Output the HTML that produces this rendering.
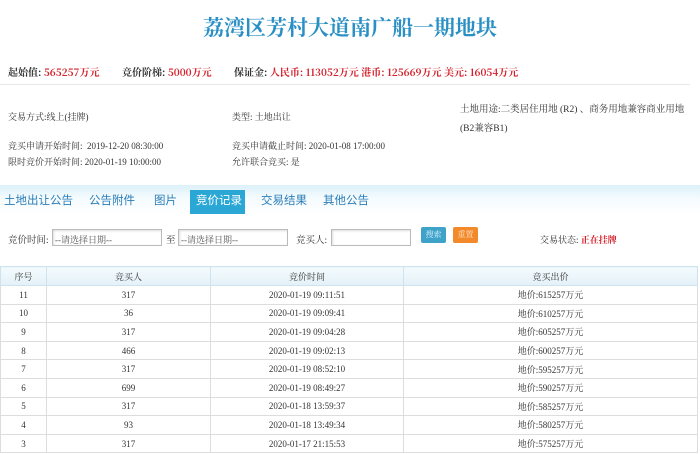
<!DOCTYPE html>
<html><head><meta charset="utf-8"><style>
*{margin:0;padding:0;box-sizing:border-box}
body{width:700px;height:454px;overflow:hidden;background:#fff;font-family:"Liberation Serif","Noto Serif CJK SC","Noto Sans CJK SC",serif;color:#333;position:relative;font-size:10px}
.a{position:absolute;white-space:nowrap}
.r{color:#d4202a;font-weight:bold}
.title{left:0;width:700px;text-align:center;top:12px;font-size:21px;color:#2a8fc4;font-family:"Noto Serif CJK SC",serif;font-weight:bold}
.tab{position:absolute;top:192px;font-size:11.5px;color:#2a7eb8;font-family:"Noto Sans CJK SC",sans-serif}
.inp{position:absolute;top:229px;height:17px;border:1px solid #bbb;background:#fff;font-size:9px;color:#555;padding:3px 2px;box-shadow:inset 1px 1px 2px #ddd}
table{position:absolute;left:0;top:266px;width:698px;border-collapse:collapse;font-size:9px;font-family:"Liberation Serif","Noto Serif CJK SC",serif}
td,th{border:1px solid #ddd;text-align:center;height:18.6px;font-weight:normal}
th{background:linear-gradient(#f4fafd,#e3f1f8);height:19px;color:#333;border-color:#cfe3ee}
.h{font-size:10px;font-weight:bold;font-family:'Noto Serif CJK SC',serif;top:64px}
</style></head><body>
<div class="a title">荔湾区芳村大道南广船一期地块</div>
<div class="a h" style="left:8px">起始值: <span class="r">565257万元</span></div>
<div class="a h" style="left:122px">竞价阶梯: <span class="r">5000万元</span></div>
<div class="a h" style="left:234px">保证金: <span class="r">人民币: 113052万元 港币: 125669万元 美元: 16054万元</span></div>
<div class="a" style="top:84px;left:0;width:690px;height:1px;background:#e8e8e8"></div>
<div class="a" style="top:110px;left:8px;font-size:9px">交易方式:线上(挂牌)</div>
<div class="a" style="top:110px;left:232px;font-size:9px">类型: 土地出让</div>
<div class="a" style="top:101px;left:460px;font-size:9.5px;line-height:19px;white-space:normal;width:232px">土地用途:二类居住用地 (R2) 、商务用地兼容商业用地 (B2兼容B1)</div>
<div class="a" style="top:139px;left:8px;font-size:9px">竞买申请开始时间: &nbsp;2019-12-20 08:30:00</div>
<div class="a" style="top:139px;left:232px;font-size:9px">竞买申请截止时间: 2020-01-08 17:00:00</div>
<div class="a" style="top:155px;left:8px;font-size:9px">限时竞价开始时间: 2020-01-19 10:00:00</div>
<div class="a" style="top:155px;left:232px;font-size:9px">允许联合竞买: 是</div>
<div class="a" style="top:185px;left:0;width:700px;height:30px;background:linear-gradient(#dcf1f9,#f5fbfe 45%,#fff)"></div>
<div class="tab" style="left:4px">土地出让公告</div>
<div class="tab" style="left:89px">公告附件</div>
<div class="tab" style="left:154px">图片</div>
<div class="a" style="left:190px;top:190px;width:55px;height:24px;background:#2ba7d6"></div>
<div class="tab" style="left:196px;color:#fff">竞价记录</div>
<div class="tab" style="left:261px">交易结果</div>
<div class="tab" style="left:323px">其他公告</div>
<div class="a" style="top:232px;left:8px;font-size:9.5px">竞价时间:</div>
<div class="inp" style="left:52px;width:110px">--请选择日期--</div>
<div class="a" style="top:232px;left:166px;font-size:9.5px">至</div>
<div class="inp" style="left:178px;width:110px">--请选择日期--</div>
<div class="a" style="top:232px;left:296px;font-size:9.5px">竞买人:</div>
<div class="inp" style="left:331px;width:80px"></div>
<div class="a" style="left:421px;top:227px;width:25px;height:16px;background:#3fa3c9;border-radius:2px;color:#cfeefa;font-size:8px;text-align:center;line-height:16px">搜索</div>
<div class="a" style="left:453px;top:227px;width:25px;height:16px;background:#f2892b;border-radius:2px;color:#ffe0c0;font-size:8px;text-align:center;line-height:16px">重置</div>
<div class="a" style="top:233px;left:540px;font-size:9px">交易状态: <span class="r">正在挂牌</span></div>
<table>
<tr><th style="width:46px">序号</th><th style="width:164px">竞买人</th><th style="width:193px">竞价时间</th><th>竞买出价</th></tr>
<tr><td>11</td><td>317</td><td>2020-01-19 09:11:51</td><td>地价:615257万元</td></tr>
<tr><td>10</td><td>36</td><td>2020-01-19 09:09:41</td><td>地价:610257万元</td></tr>
<tr><td>9</td><td>317</td><td>2020-01-19 09:04:28</td><td>地价:605257万元</td></tr>
<tr><td>8</td><td>466</td><td>2020-01-19 09:02:13</td><td>地价:600257万元</td></tr>
<tr><td>7</td><td>317</td><td>2020-01-19 08:52:10</td><td>地价:595257万元</td></tr>
<tr><td>6</td><td>699</td><td>2020-01-19 08:49:27</td><td>地价:590257万元</td></tr>
<tr><td>5</td><td>317</td><td>2020-01-18 13:59:37</td><td>地价:585257万元</td></tr>
<tr><td>4</td><td>93</td><td>2020-01-18 13:49:34</td><td>地价:580257万元</td></tr>
<tr><td>3</td><td>317</td><td>2020-01-17 21:15:53</td><td>地价:575257万元</td></tr>
</table>
</body></html>
